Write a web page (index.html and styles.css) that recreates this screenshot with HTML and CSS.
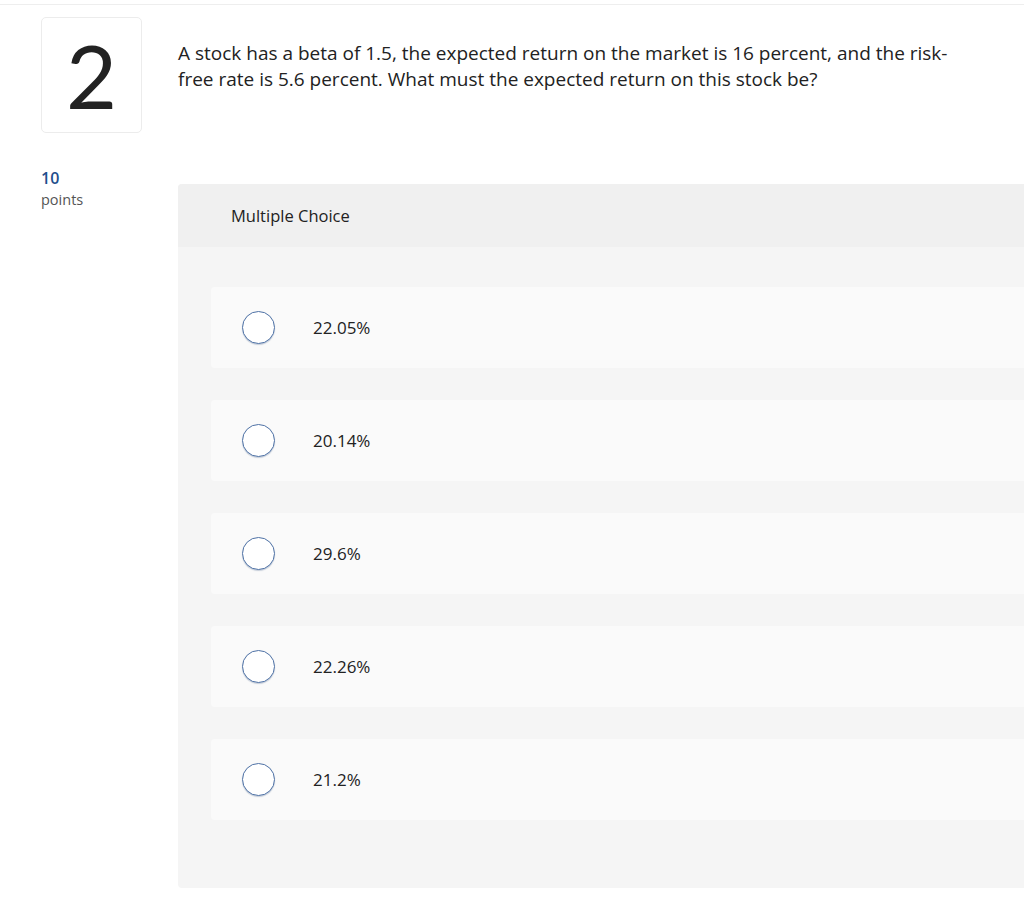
FILE: index.html
```html
<!DOCTYPE html>
<html>
<head>
<meta charset="utf-8">
<link rel="stylesheet" href="styles.css">
</head>
<body>
<div class="topline"></div>
<div class="page">
  <div class="side">
    <div class="numbox">2</div>
    <div class="pts-num">10</div>
    <div class="pts-label">points</div>
  </div>
  <div class="main">
    <p class="question">A stock has a beta of 1.5, the expected return on the market is 16 percent, and the risk-free rate is 5.6 percent. What must the expected return on this stock be?</p>
    <div class="panel">
      <div class="panel-head">Multiple Choice</div>
      <div class="panel-body">
        <div class="option"><span class="radio"></span><span class="label">22.05%</span></div>
        <div class="option"><span class="radio"></span><span class="label">20.14%</span></div>
        <div class="option"><span class="radio"></span><span class="label">29.6%</span></div>
        <div class="option"><span class="radio"></span><span class="label">22.26%</span></div>
        <div class="option"><span class="radio"></span><span class="label">21.2%</span></div>
      </div>
    </div>
  </div>
</div>
</body>
</html>
```
FILE: styles.css
```css
html, body {
  margin: 0;
  padding: 0;
  background: #fff;
  overflow: hidden;
}
body {
  font-family: "Open Sans", Lato, sans-serif;
  color: #222;
  width: 1024px;
}
.topline {
  height: 4px;
  border-bottom: 1px solid #eeeeee;
}
.page {
  display: grid;
  grid-template-columns: 101px 1fr;
  column-gap: 36px;
  padding-left: 41px;
  padding-top: 12px;
}
.numbox {
  width: 99px;
  height: 114px;
  border: 1px solid #ececec;
  border-radius: 5px;
  display: flex;
  align-items: center;
  justify-content: center;
  font-family: Lato, sans-serif;
  font-size: 88px;
  font-weight: 400;
  color: #222;
  line-height: 1;
}
.pts-num {
  margin-top: 34px;
  font-size: 16px;
  font-weight: 600;
  color: #1f4e8c;
  line-height: 22px;
}
.pts-label {
  font-size: 14.5px;
  color: #555;
  line-height: 22px;
}
.question {
  margin: 23px 0 0 0;
  max-width: 785px;
  font-size: 19px;
  line-height: 26px;
  color: #222;
}
.panel {
  margin-top: 92px;
  background: #f5f5f5;
  border-radius: 4px 0 0 4px;
  padding-bottom: 68px;
}
.panel-head {
  background: #f0f0f0;
  height: 63px;
  border-radius: 4px 0 0 0;
  padding-left: 53px;
  display: flex;
  align-items: center;
  font-size: 16.5px;
  color: #222;
}
.panel-body {
  padding: 40px 0 0 33px;
  display: flex;
  flex-direction: column;
  gap: 32px;
}
.option {
  height: 81px;
  background: #fafafa;
  border-radius: 4px 0 0 4px;
  display: flex;
  align-items: center;
  padding-left: 31px;
}
.radio {
  width: 31px;
  height: 31px;
  border: 1.5px solid #4f72a6;
  border-radius: 50%;
  background: #fff;
  box-sizing: content-box;
  box-shadow: 0 1px 1px rgba(40, 70, 120, 0.25);
  flex: none;
}
.label {
  margin-left: 38px;
  font-size: 17px;
  color: #222;
}
```
